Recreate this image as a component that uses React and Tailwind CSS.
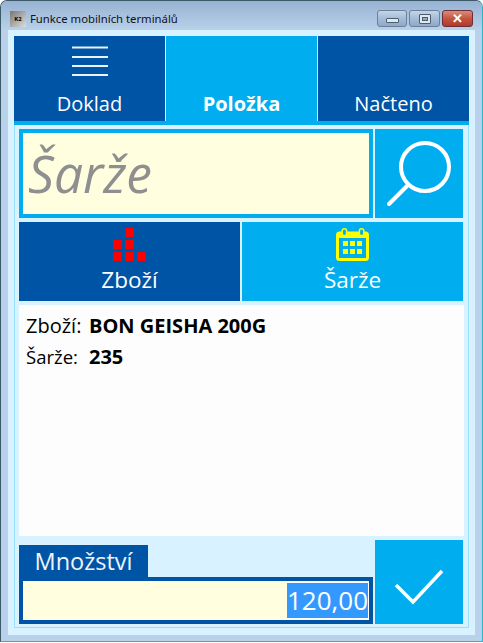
import React from "react";

const F = { fontFamily: '"Open Sans","Noto Sans",sans-serif' };

function Menu() {
  return (
    <svg width="36" height="32" viewBox="0 0 36 32" className="block" fill="none" stroke="#eaf2fa" strokeWidth="2">
      <path d="M0 1.5H36M0 11H36M0 20H36M0 29H36" />
    </svg>
  );
}

function Search() {
  return (
    <svg width="66" height="66" viewBox="0 0 66 66" fill="none" stroke="#fff" strokeWidth="4">
      <circle cx="39" cy="26" r="24" />
      <path d="M22 44L3 63" strokeLinecap="round" />
    </svg>
  );
}

function Blocks() {
  const c = [[12, 0], [0, 12], [12, 12], [0, 24], [12, 24], [24, 24]];
  return (
    <svg width="33" height="33" viewBox="0 0 33 33" fill="#ff0000">
      {c.map(([x, y]) => <rect key={`${x}-${y}`} x={x} y={y} width="9" height="9" rx="1" />)}
    </svg>
  );
}

function Cal() {
  const c = [[7, 13], [14, 13], [21, 13], [7, 21], [14, 21], [21, 21]];
  return (
    <svg width="33" height="33" viewBox="0 0 33 33" fill="none">
      <rect x="1.5" y="5" width="30" height="26.5" rx="2" stroke="#ffff00" strokeWidth="3" />
      <rect x="1.5" y="5" width="30" height="5" fill="#ffff00" />
      <rect x="6.2" y="0.8" width="4.4" height="7" rx="2.2" fill="#00aeef" stroke="#ffff00" strokeWidth="1.5" />
      <rect x="23.4" y="0.8" width="4.4" height="7" rx="2.2" fill="#00aeef" stroke="#ffff00" strokeWidth="1.5" />
      {c.map(([x, y]) => <rect key={`${x}-${y}`} x={x} y={y} width="5" height="5" fill="#ffff00" />)}
    </svg>
  );
}

function Check() {
  return (
    <svg width="50" height="36" viewBox="0 0 50 36" className="mt-[10px]" fill="none" stroke="#fff" strokeWidth="3.5">
      <path d="M2 16L19 33L48 2" />
    </svg>
  );
}

function Logo() {
  return (
    <div className="w-4 h-4 bg-gradient-to-br from-[#777] via-[#aaa] to-[#ddd] flex items-center justify-center text-[6px] font-bold text-black leading-none">
      K2
    </div>
  );
}

function WinBtn({ w, red, children }) {
  return (
    <div
      className={`h-[17px] rounded-[3px] border flex items-center justify-center ${w} ${
        red
          ? "border-[#6d2f35] bg-gradient-to-b from-[#d98b7f] via-[#c4553f] to-[#b03a2c]"
          : "border-[#6e7f99] bg-gradient-to-b from-[#c4d5e8] via-[#a4bcd6] to-[#8fa9c8]"
      }`}
    >
      {children}
    </div>
  );
}

function Tab({ active, bold, icon, label }) {
  return (
    <div className={`flex-1 h-[85px] flex flex-col items-center ${active ? "bg-[#00aeef]" : "bg-[#0054a6]"}`}>
      <div className="h-[54px] pt-[10px]">{icon}</div>
      <div className={`text-white text-[20px] leading-[28px] ${bold ? "font-bold" : "font-normal"}`}>{label}</div>
    </div>
  );
}

function Action({ active, icon, label }) {
  return (
    <div className={`flex-1 h-[79px] flex flex-col items-center pt-[6px] ${active ? "bg-[#00aeef]" : "bg-[#0054a6]"}`}>
      {icon}
      <div className="text-white text-[22.5px] leading-[30px] mt-[4px]">{label}</div>
    </div>
  );
}

export default function App() {
  return (
    <div style={F} className="w-[483px] h-[642px] bg-[#b9d1ea] border border-[#3a5a68] border-r-[#2ab5c8] border-b-[#2ab5c8] rounded-t-[7px] flex flex-col overflow-hidden text-black">
      <div className="h-[29px] shrink-0 flex items-center pl-[9px] pr-[9px] pt-[6px] bg-gradient-to-b from-[#97b2d2] to-[#b9d1ea]">
        <Logo />
        <div className="ml-[4px] text-[11.3px] leading-none text-[#10101a]" style={{ fontFamily: '"Noto Sans",sans-serif' }}>Funkce mobilních terminálů</div>
        <div className="ml-auto flex gap-[2px]">
          <WinBtn w="w-[30px]">
            <div className="w-[13px] h-[5px] mt-[4px] bg-[#dfe7ef] border border-[#4d5d70] rounded-[1px]" />
          </WinBtn>
          <WinBtn w="w-[31px]">
            <div className="w-[12px] h-[10px] bg-[#dfe7ef] border border-[#4d5d70] rounded-[1px] flex items-center justify-center">
              <div className="w-[6px] h-[4px] bg-[#8fa9c8] border border-[#4d5d70]" />
            </div>
          </WinBtn>
          <WinBtn w="w-[31px]" red>
            <div className="text-white text-[13px] font-bold leading-none">✕</div>
          </WinBtn>
        </div>
      </div>
      <div className="mx-[7px] h-[605px] bg-[#d9f2ff] pt-[6px] px-[6px] flex flex-col">
        <div className="flex gap-px">
          <Tab icon={<Menu />} label="Doklad" />
          <Tab active bold label="Položka" />
          <Tab label="Načteno" />
        </div>
        <div className="h-[4px] bg-[#00aeef]" />
        <div className="h-[503px] border-x border-b border-[#99e0ff] px-[4px] pt-[4px] flex flex-col">
          <div className="flex gap-[2px] h-[89px]">
            <div className="w-[354px] border-[4px] border-[#00aeef] bg-[#ffffe0] flex items-center pl-[5px]">
              <div className="text-[51.5px] italic text-[#8f8f8f] leading-none">Šarže</div>
            </div>
            <div className="w-[88px] bg-[#00aeef] flex items-center justify-center">
              <Search />
            </div>
          </div>
          <div className="flex gap-[2px] mt-[4px] w-[444px]">
            <Action icon={<Blocks />} label="Zboží" />
            <Action active icon={<Cal />} label="Šarže" />
          </div>
          <div className="mt-[4px] h-[231px] w-[445px] bg-[#fdfdfd] px-[7px] pt-[6px] text-[20px]">
            <div className="flex items-center h-[30px]">
              <span className="w-[63px] shrink-0">Zboží:</span>
              <span className="font-bold text-[20px]">BON GEISHA 200G</span>
            </div>
            <div className="flex items-center h-[30px] mt-px">
              <span className="w-[63px] shrink-0 text-[18.5px]">Šarže:</span>
              <span className="font-bold text-[20px]">235</span>
            </div>
          </div>
          <div className="flex gap-[2px] mt-[4px] h-[84px]">
            <div className="w-[354px] flex flex-col justify-end">
              <div className="w-[129px] h-[32px] bg-[#0054a6] text-[#eef5fb] text-[23.5px] leading-[32px] text-center">Množství</div>
              <div className="h-[47px] border-[4px] border-[#0054a6] bg-[#ffffe0] flex justify-end items-center">
                <div className="w-[82px] h-[37px] bg-[#3399ff] border-y border-r border-white text-white text-[26px] leading-[35px] text-right whitespace-nowrap overflow-hidden">120,00</div>
              </div>
            </div>
            <div className="w-[88px] bg-[#00aeef] flex items-center justify-center">
              <Check />
            </div>
          </div>
        </div>
      </div>
    </div>
  );
}
